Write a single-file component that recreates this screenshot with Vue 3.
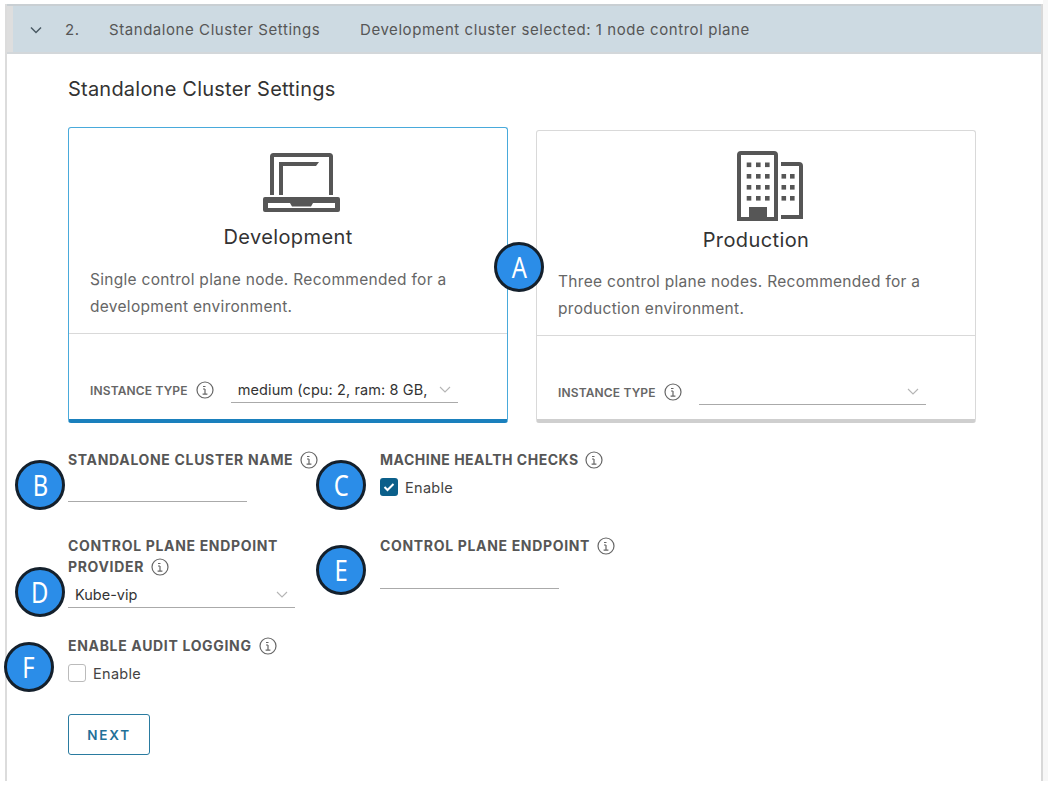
<template>
  <div class="page">
    <div class="panel">
      <div class="step-header">
        <span class="step-strip"></span>
        <svg class="step-chevron" width="12" height="8" viewBox="0 0 12 8"><path d="M1 1.500l5 5 5-5" fill="none" stroke="#4a5a64" stroke-width="1.500" /></svg>
        <span class="step-num">2.</span>
        <span class="step-title">Standalone Cluster Settings</span>
        <span class="step-sub">Development cluster selected: 1 node control plane</span>
      </div>

      <div class="body">
        <h2 class="title">Standalone Cluster Settings</h2>

        <div class="cards">
          <div class="card selected">
            <div class="card-top">
              <svg class="card-icon laptop" width="80" height="60" viewBox="0 0 80 60">
                <path d="M10 42V3.500a1.500 1.500 0 0 1 1.500-1.500h56a1.500 1.500 0 0 1 1.500 1.500V42" fill="none" stroke="#565656" stroke-width="4" />
                <path d="M17 42V9h40l-3 4H21v29z" fill="#565656" />
                <path fill-rule="evenodd" d="M3 44h73a2 2 0 0 1 2 2v11a2 2 0 0 1-2 2H3a2 2 0 0 1-2-2V46a2 2 0 0 1 2-2zM6 50v5h67v-5z" fill="#565656" />
                <path d="M28 50h23l-2 3.500H30z" fill="#565656" />
              </svg>
              <div class="card-name">Development</div>
              <p class="card-desc">Single control plane node. Recommended for a development environment.</p>
            </div>
            <div class="card-foot">
              <span class="foot-label">INSTANCE TYPE</span>
              <svg class="info" viewBox="0 0 18 18"><circle cx="9" cy="9" r="8" /><path d="M7 5.500h2.500M9 8v5.200M6.600 13.200h4.800M7 8h2" /></svg>
              <div class="select foot-select">
                <span>medium (cpu: 2, ram: 8 GB,</span>
                <svg class="chev" width="12" height="7" viewBox="0 0 12 7"><path d="M1 1l5 5 5-5" /></svg>
              </div>
            </div>
          </div>

          <div class="card">
            <div class="card-top">
              <svg class="card-icon building" width="80" height="70" viewBox="0 0 80 70">
                <path d="M3 68V4a2 2 0 0 1 2-2h33a2 2 0 0 1 2 2v64z" fill="none" stroke="#565656" stroke-width="4" />
                <path d="M45 13h18a2 2 0 0 1 2 2v51H45" fill="none" stroke="#565656" stroke-width="4" />
                <rect x="13" y="56" width="18" height="12" fill="#565656" />
                <g fill="#565656">
                  <rect v-for="w in windows" :key="w[0] + '-' + w[1]" :x="w[0]" :y="w[1]" width="4.600" height="4.600" />
                </g>
              </svg>
              <div class="card-name">Production</div>
              <p class="card-desc">Three control plane nodes. Recommended for a production environment.</p>
            </div>
            <div class="card-foot">
              <span class="foot-label">INSTANCE TYPE</span>
              <svg class="info" viewBox="0 0 18 18"><circle cx="9" cy="9" r="8" /><path d="M7 5.500h2.500M9 8v5.200M6.600 13.200h4.800M7 8h2" /></svg>
              <div class="select foot-select">
                <span></span>
                <svg class="chev" width="12" height="7" viewBox="0 0 12 7"><path d="M1 1l5 5 5-5" /></svg>
              </div>
            </div>
          </div>
        </div>

        <div class="form">
          <div class="field first-row">
            <div class="label">STANDALONE CLUSTER NAME <svg class="info" viewBox="0 0 18 18"><circle cx="9" cy="9" r="8" /><path d="M7 5.500h2.500M9 8v5.200M6.600 13.200h4.800M7 8h2" /></svg></div>
            <div class="input"></div>
          </div>
          <div class="field first-row">
            <div class="label tight">MACHINE HEALTH CHECKS <svg class="info" viewBox="0 0 18 18"><circle cx="9" cy="9" r="8" /><path d="M7 5.500h2.500M9 8v5.200M6.600 13.200h4.800M7 8h2" /></svg></div>
            <label class="check">
              <span class="box on"><svg width="12" height="10" viewBox="0 0 12 10"><path d="M1.500 5l3 3 6-6" fill="none" stroke="#fff" stroke-width="2" /></svg></span>
              Enable
            </label>
          </div>

          <div class="field">
            <div class="label">CONTROL PLANE ENDPOINT<br />PROVIDER <svg class="info" viewBox="0 0 18 18"><circle cx="9" cy="9" r="8" /><path d="M7 5.500h2.500M9 8v5.200M6.600 13.200h4.800M7 8h2" /></svg></div>
            <div class="select provider">
              <span>Kube-vip</span>
              <svg class="chev" width="12" height="7" viewBox="0 0 12 7"><path d="M1 1l5 5 5-5" /></svg>
            </div>
          </div>
          <div class="field">
            <div class="label">CONTROL PLANE ENDPOINT <svg class="info" viewBox="0 0 18 18"><circle cx="9" cy="9" r="8" /><path d="M7 5.500h2.500M9 8v5.200M6.600 13.200h4.800M7 8h2" /></svg></div>
            <div class="input endpoint"></div>
          </div>

          <div class="field">
            <div class="label">ENABLE AUDIT LOGGING <svg class="info" viewBox="0 0 18 18"><circle cx="9" cy="9" r="8" /><path d="M7 5.500h2.500M9 8v5.200M6.600 13.200h4.800M7 8h2" /></svg></div>
            <label class="check">
              <span class="box"></span>
              Enable
            </label>
          </div>
        </div>

        <button class="next">NEXT</button>
      </div>
    </div>
    <div class="gutter"></div>

    <span v-for="b in badges" :key="b.text" class="badge" :style="{ left: b.x + 'px', top: b.y + 'px' }"><span class="badge-letter">{{ b.text }}</span></span>
  </div>
</template>

<script setup>
const windows = []
for (const y of [11.500, 23, 34, 45]) {
  for (const x of [10.700, 20, 29]) windows.push([x, y])
}
for (const y of [23, 34, 45]) {
  for (const x of [45.500, 54]) windows.push([x, y])
}

const badges = [
  { text: 'A', x: 494, y: 242 },
  { text: 'B', x: 15, y: 460 },
  { text: 'C', x: 316, y: 460 },
  { text: 'D', x: 15, y: 567 },
  { text: 'E', x: 316, y: 545 },
  { text: 'F', x: 4, y: 642 },
]
</script>

<style>
html, body {
  background: #fff;
}
</style>

<style scoped>
.page {
  position: relative;
  display: flex;
  width: 1048px;
  height: 781px;
  overflow: hidden;
  font-family: Inter, "Noto Sans", sans-serif;
  color: #565656;
}

.panel {
  flex: none;
  width: 1034px;
  margin: 4px 0 0 5px;
  border-left: 2px solid #dcdcdc;
  border-right: 2px solid #d8d8d8;
  background: #fff;
}

.gutter {
  flex: 1;
  background: #f7f7f7;
}

.step-header {
  display: flex;
  align-items: center;
  height: 50px;
  border-top: 2px solid #c9cfd3;
  border-bottom: 2px solid #d3d7da;
  box-sizing: border-box;
  background: #cddae2;
  font-size: 15px;
  letter-spacing: 0.56px;
  color: #565656;
}

.step-strip {
  align-self: stretch;
  width: 6px;
  background: #dedede;
}

.step-chevron {
  margin-left: 17px;
  margin-top: 2px;
}

.step-num {
  margin-left: 23px;
  width: 44px;
}

.step-title {
  width: 251px;
}

.body {
  padding: 0 0 0 61px;
}

.title {
  margin: 0;
  padding-top: 23px;
  height: 52px;
  box-sizing: border-box;
  font-size: 20px;
  line-height: 24px;
  font-weight: 400;
  letter-spacing: 0.22px;
  color: #333;
}

.cards {
  display: flex;
  gap: 28px;
  margin-top: 24px;
}

.card {
  display: flex;
  flex-direction: column;
  width: 440px;
  height: 293px;
  box-sizing: border-box;
  border: 1px solid #d9d9d9;
  border-bottom: 4px solid #cfcfcf;
  border-radius: 3px;
}

.card.selected {
  margin-top: -3px;
  height: 296px;
  border-color: #49aadb;
  border-bottom-color: #1a80bd;
}

.card-top {
  height: 205px;
  padding: 20px 21px 0;
  box-sizing: border-box;
  border-bottom: 1px solid #d9d9d9;
}

.card.selected .card-top {
  height: 206px;
  padding-top: 25px;
}

.card-icon {
  display: block;
  margin: 0 auto;
}

.laptop {
  transform: translateX(14px);
}

.building {
  transform: translateX(20px);
}

.card-name {
  margin-top: 11px;
  text-align: center;
  font-size: 20px;
  line-height: 26px;
  letter-spacing: 0.4px;
  color: #333;
}

.card:not(.selected) .card-name {
  margin-top: 6px;
}

.card-desc {
  margin: 16px 0 0;
  font-size: 15.500px;
  line-height: 27px;
  letter-spacing: 0.3px;
  color: #666;
}

.card:not(.selected) .card-desc {
  margin-top: 15px;
}

.card-foot {
  display: flex;
  align-items: center;
  padding: 43px 0 0 21px;
}

.foot-label {
  font-size: 12px;
  font-weight: 600;
  letter-spacing: 0.15px;
  color: #666;
}

.card-foot .info {
  margin-left: 8px;
}

.foot-select {
  width: 227px;
  margin-left: 17px;
  letter-spacing: 0.1px;
}

.info {
  width: 18px;
  height: 18px;
  fill: none;
  stroke: #666;
  stroke-width: 1.200;
  vertical-align: -4px;
  margin-left: 3px;
}

.select {
  display: flex;
  align-items: center;
  justify-content: space-between;
  box-sizing: border-box;
  height: 26px;
  padding: 0 7px 0 7px;
  border-bottom: 1px solid #aaa;
  font-size: 14.500px;
  color: #333;
}

.chev {
  fill: none;
  stroke: #b5b5b5;
  stroke-width: 1.100;
}

.form {
  display: grid;
  grid-template-columns: 312px 1fr;
  row-gap: 27px;
  margin-top: 26px;
}

.first-row {
  padding-bottom: 6px;
}

.label {
  font-size: 14px;
  font-weight: 700;
  line-height: 21px;
  letter-spacing: 0.67px;
  color: #565656;
}

.label.tight {
  letter-spacing: 0.5px;
}

.input {
  width: 179px;
  height: 21px;
  margin-top: 10px;
  border-bottom: 1px solid #aaa;
}

.input.endpoint {
  margin-top: 11px;
}

.provider {
  width: 227px;
  margin-top: 5px;
}

.check {
  display: flex;
  align-items: center;
  gap: 7px;
  margin-top: 8px;
  font-size: 14.500px;
  letter-spacing: 0.3px;
  color: #444;
}

.box {
  display: flex;
  align-items: center;
  justify-content: center;
  width: 18px;
  height: 18px;
  box-sizing: border-box;
  border: 1px solid #bbb;
  border-radius: 3px;
}

.box.on {
  border: none;
  background: #0b5f8a;
}

.next {
  display: block;
  width: 82px;
  height: 41px;
  margin-top: 32px;
  padding: 0;
  border: 1px solid #2a7ba0;
  border-radius: 3px;
  background: #fff;
  font-family: inherit;
  font-size: 13.500px;
  font-weight: 600;
  letter-spacing: 1.800px;
  color: #1f7199;
}

.badge {
  position: absolute;
  display: flex;
  align-items: center;
  justify-content: center;
  width: 50px;
  height: 50px;
  box-sizing: border-box;
  border: 3px solid #14202c;
  border-radius: 50%;
  background: #2b8de8;
  color: #fff;
}

.badge-letter {
  display: inline-block;
  margin-top: -2px;
  font-family: "Noto Sans", sans-serif;
  font-size: 29px;
  font-weight: 400;
  line-height: 1;
  transform: scaleX(0.82);
}
</style>
